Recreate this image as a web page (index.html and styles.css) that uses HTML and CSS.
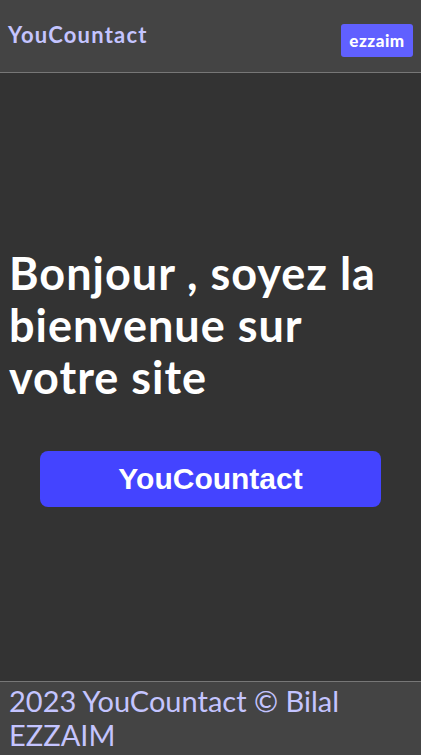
FILE: index.html
```html
<!DOCTYPE html>
<html lang="fr">
<head>
<meta charset="utf-8">
<title>YouCountact</title>
<link rel="stylesheet" href="styles.css">
</head>
<body>
<div class="page">
  <header class="topbar">
    <span class="brand">YouCountact</span>
    <button class="user-btn">ezzaim</button>
  </header>
  <main class="hero">
    <h1 class="title">Bonjour , soyez la bienvenue sur votre site</h1>
    <div class="cta-wrap">
      <button class="cta">YouCountact</button>
    </div>
  </main>
  <footer class="footer">2023 YouCountact © Bilal EZZAIM</footer>
</div>
</body>
</html>
```

FILE: styles.css
```css
html, body {
  margin: 0;
  padding: 0;
  height: 100%;
}
body {
  background: #333333;
  font-family: "Gill Sans", "Lato", "Noto Sans", sans-serif;
}
.page {
  display: flex;
  flex-direction: column;
  min-height: 100vh;
}
.topbar {
  height: 73px;
  box-sizing: border-box;
  background: #444444;
  border-bottom: 1px solid #777777;
  display: flex;
  align-items: center;
  justify-content: space-between;
  padding: 0 8px;
}
.brand {
  color: #c4c4ff;
  font-weight: 700;
  font-size: 22px;
  letter-spacing: 1.2px;
  margin-top: -3px;
}
.user-btn {
  background: #6060ff;
  color: #ffffff;
  border: none;
  border-radius: 3px;
  font-family: inherit;
  font-weight: 900;
  font-size: 17px;
  letter-spacing: 0.5px;
  width: 72px;
  height: 33px;
  padding: 0;
  margin-top: 9px;
}
.hero {
  flex: 1;
  display: flex;
  flex-direction: column;
  padding: 0 9px;
}
.title {
  color: #ffffff;
  font-size: 45px;
  font-weight: 700;
  letter-spacing: 1px;
  line-height: 52px;
  margin: 174px 0 0 0;
}
.cta-wrap {
  display: flex;
  justify-content: center;
  margin-top: 48px;
}
.cta {
  background: #4444ff;
  color: #ffffff;
  border: none;
  border-radius: 8px;
  width: 341px;
  height: 56px;
  font-family: "Liberation Sans", Arial, sans-serif;
  font-weight: 700;
  font-size: 30px;
}
.footer {
  background: #444444;
  border-top: 1px solid #777777;
  color: #c4c4ff;
  font-size: 29px;
  line-height: 34px;
  padding: 2px 9px 0;
  height: 74px;
  box-sizing: border-box;
}
```
